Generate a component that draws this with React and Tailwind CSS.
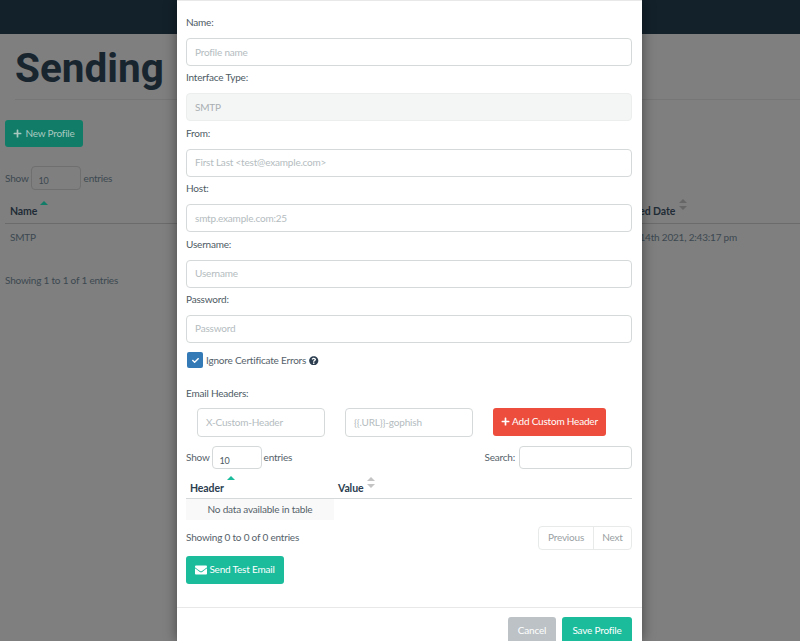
import React from 'react';
import { FaPlus, FaEnvelope, FaCheck, FaQuestionCircle } from 'react-icons/fa';

const SortIcon = () => (
  <svg width="8" height="11" viewBox="0 0 8 11" className="shrink-0 mt-[2px]">
    <path d="M4 0 L8 4 H0 Z M4 11 L8 7 H0 Z" fill="#c4c4c4" />
  </svg>
);

const Field = ({ label, placeholder, disabled }) => (
  <div>
    <label className="block leading-[16px] text-[#4d5a63] h-[16px]">{label}</label>
    <div
      className={`mt-[8px] h-[28px] rounded-[4px] border flex items-center px-[8px] ${
        disabled
          ? 'bg-[#f4f6f6] border-[#eceeee] text-[#a9afb2]'
          : 'bg-white border-[#d5d9da] text-[#b4bcc0]'
      }`}
    >
      {placeholder}
    </div>
  </div>
);

const Background = () => (
  <div className="h-full bg-[#7f7f7f] text-[#39444c]">
    <div className="h-[34px] bg-[#13212b]" />
    <div className="pt-[7px] pl-[15px]">
      <h1 className="font-['Roboto',sans-serif] font-bold tracking-normal text-[40.5px] leading-[54px] text-[#18252f]">Sending</h1>
      <div className="mt-[4px] border-b border-[#767676]" />
    </div>
    <div className="pl-[5px] mt-[20px]">
      <button className="h-[27px] w-[78px] rounded-[3px] bg-[#117d68] text-[#a9c8c0] flex items-center justify-center gap-[3px]">
        <FaPlus className="text-[9px]" />
        New Profile
      </button>
      <div className="mt-[19px] flex items-center gap-[1px] text-[#3c4850]">
        <span>Show</span>
        <div className="ml-[1px] w-[50px] h-[24px] rounded-[4px] border border-[#6f6f6f] flex items-center pl-[7px] pt-[6px] text-[9px]">10</div>
        <span className="ml-[2px]">entries</span>
      </div>
      <div className="mt-[13px] h-[21px] border-b border-[#6b6b6b] flex items-start justify-between text-[10.5px] font-bold tracking-[-0.1px] text-[#1f2c36]">
        <div className="flex pl-[5px] gap-[3px]">
          <span className="mt-[1px]">Name</span>
          <svg width="8" height="4" viewBox="0 0 8 4" className="-mt-[2px]"><path d="M4 0 L8 4 H0 Z" fill="#117d68" /></svg>
        </div>
        <div className="flex w-[191px] gap-[4px]">
          <span className="mt-[1px]">Modified Date</span>
          <svg width="8" height="11" viewBox="0 0 8 11" className="-mt-[4px]"><path d="M4 0 L8 4 H0 Z M4 11 L8 7 H0 Z" fill="#666" /></svg>
        </div>
      </div>
      <div className="mt-[6px] flex justify-between text-[#3c4850]">
        <span className="pl-[5px]">SMTP</span>
        <span className="w-[179px]">July 14th 2021, 2:43:17 pm</span>
      </div>
      <div className="mt-[28px] text-[#3c4850]">Showing 1 to 1 of 1 entries</div>
    </div>
  </div>
);

const Modal = () => (
  <div className="absolute left-[177px] top-0 w-[465px] h-full bg-white border-t border-[#e8e8e8] shadow-[0_0_12px_rgba(0,0,0,0.45)]">
    <div className="pl-[9px] pr-[10px] pt-[13px]">
      <div className="flex flex-col gap-[3.4px]">
        <Field label="Name:" placeholder="Profile name" />
        <Field label="Interface Type:" placeholder="SMTP" disabled />
        <Field label="From:" placeholder="First Last <test@example.com>" />
        <Field label="Host:" placeholder="smtp.example.com:25" />
        <Field label="Username:" placeholder="Username" />
        <Field label="Password:" placeholder="Password" />
      </div>

      <div className="mt-[9px] flex items-center gap-[3px] pl-px h-[17px] text-[#56626a]">
        <span className="w-[16px] h-[16px] rounded-[2px] bg-[#337ab7] flex items-center justify-center">
          <FaCheck className="text-white text-[7px]" />
        </span>
        <span>Ignore Certificate Errors</span>
        <FaQuestionCircle className="text-[#2c3e50] text-[9.5px]" />
      </div>

      <div className="mt-[16px] leading-[16px] text-[#4d5a63]">Email Headers:</div>

      <div className="mt-[7px] pl-[11px] flex items-start">
        <div className="w-[128px] h-[29px] rounded-[4px] border border-[#d5d9da] flex items-center px-[8px] text-[#b4bcc0]">X-Custom-Header</div>
        <div className="ml-[20px] w-[128px] h-[29px] rounded-[4px] border border-[#d5d9da] flex items-center px-[8px] text-[#b4bcc0]">{'{{.URL}}-gophish'}</div>
        <button className="ml-[20px] w-[113px] h-[28px] rounded-[3px] bg-[#ec4d3c] text-white whitespace-nowrap flex items-center justify-center gap-[2px]">
          <FaPlus className="text-[9px]" />
          Add Custom Header
        </button>
      </div>

      <div className="mt-[9px] flex items-center justify-between text-[#56626a]">
        <div className="flex items-center gap-[2px]">
          <span>Show</span>
          <div className="w-[50px] h-[23px] rounded-[4px] border border-[#d5d9da] flex items-center pl-[7px] pt-[6px] text-[9px] text-[#4d5a63]">10</div>
          <span>entries</span>
        </div>
        <div className="flex items-center gap-[4px]">
          <span>Search:</span>
          <div className="w-[113px] h-[23px] rounded-[4px] border border-[#d5d9da]" />
        </div>
      </div>

      <div className="mt-[6px] h-[24px] border-b border-[#d5d9da] flex text-[10.5px] font-bold tracking-[-0.1px] text-[#2c3e50]">
        <div className="w-[152px] flex pl-[4px] gap-[3px] items-start">
          <span className="mt-[6px]">Header</span>
          <svg width="8" height="4" viewBox="0 0 8 4" className="mt-[1px]"><path d="M4 0 L8 4 H0 Z" fill="#1abc9c" /></svg>
        </div>
        <div className="flex gap-[4px] items-start">
          <span className="mt-[6px]">Value</span>
          <SortIcon />
        </div>
      </div>
      <div className="w-[148px] h-[21px] bg-[#f9f9f9] flex items-center justify-center text-[#56626a]">No data available in table</div>

      <div className="mt-[6px] flex items-center justify-between text-[#56626a]">
        <span>Showing 0 to 0 of 0 entries</span>
        <div className="flex h-[24px] rounded-[4px] border border-[#e8eaea] text-[#9a9fa3]">
          <span className="w-[55px] flex items-center justify-center border-r border-[#e8eaea]">Previous</span>
          <span className="w-[37px] flex items-center justify-center">Next</span>
        </div>
      </div>

      <button className="mt-[6px] w-[98px] h-[28px] rounded-[3px] bg-[#1abc9c] text-white flex items-center justify-center gap-[2px]">
        <FaEnvelope className="text-[12px]" />
        Send Test Email
      </button>
    </div>

    <div className="mt-[23px] border-t border-[#e8e8e8] pt-[9px] pr-[10px] flex justify-end gap-[6px]">
      <button className="w-[48px] h-[28px] rounded-[3px] bg-[#bcc2c6] text-white">Cancel</button>
      <button className="w-[70px] h-[28px] rounded-[3px] bg-[#1abc9c] text-white">Save Profile</button>
    </div>
  </div>
);

export default function App() {
  return (
    <div className="relative h-[641px] overflow-hidden font-['Lato',sans-serif] text-[10px] tracking-[-0.2px]">
      <Background />
      <Modal />
    </div>
  );
}
